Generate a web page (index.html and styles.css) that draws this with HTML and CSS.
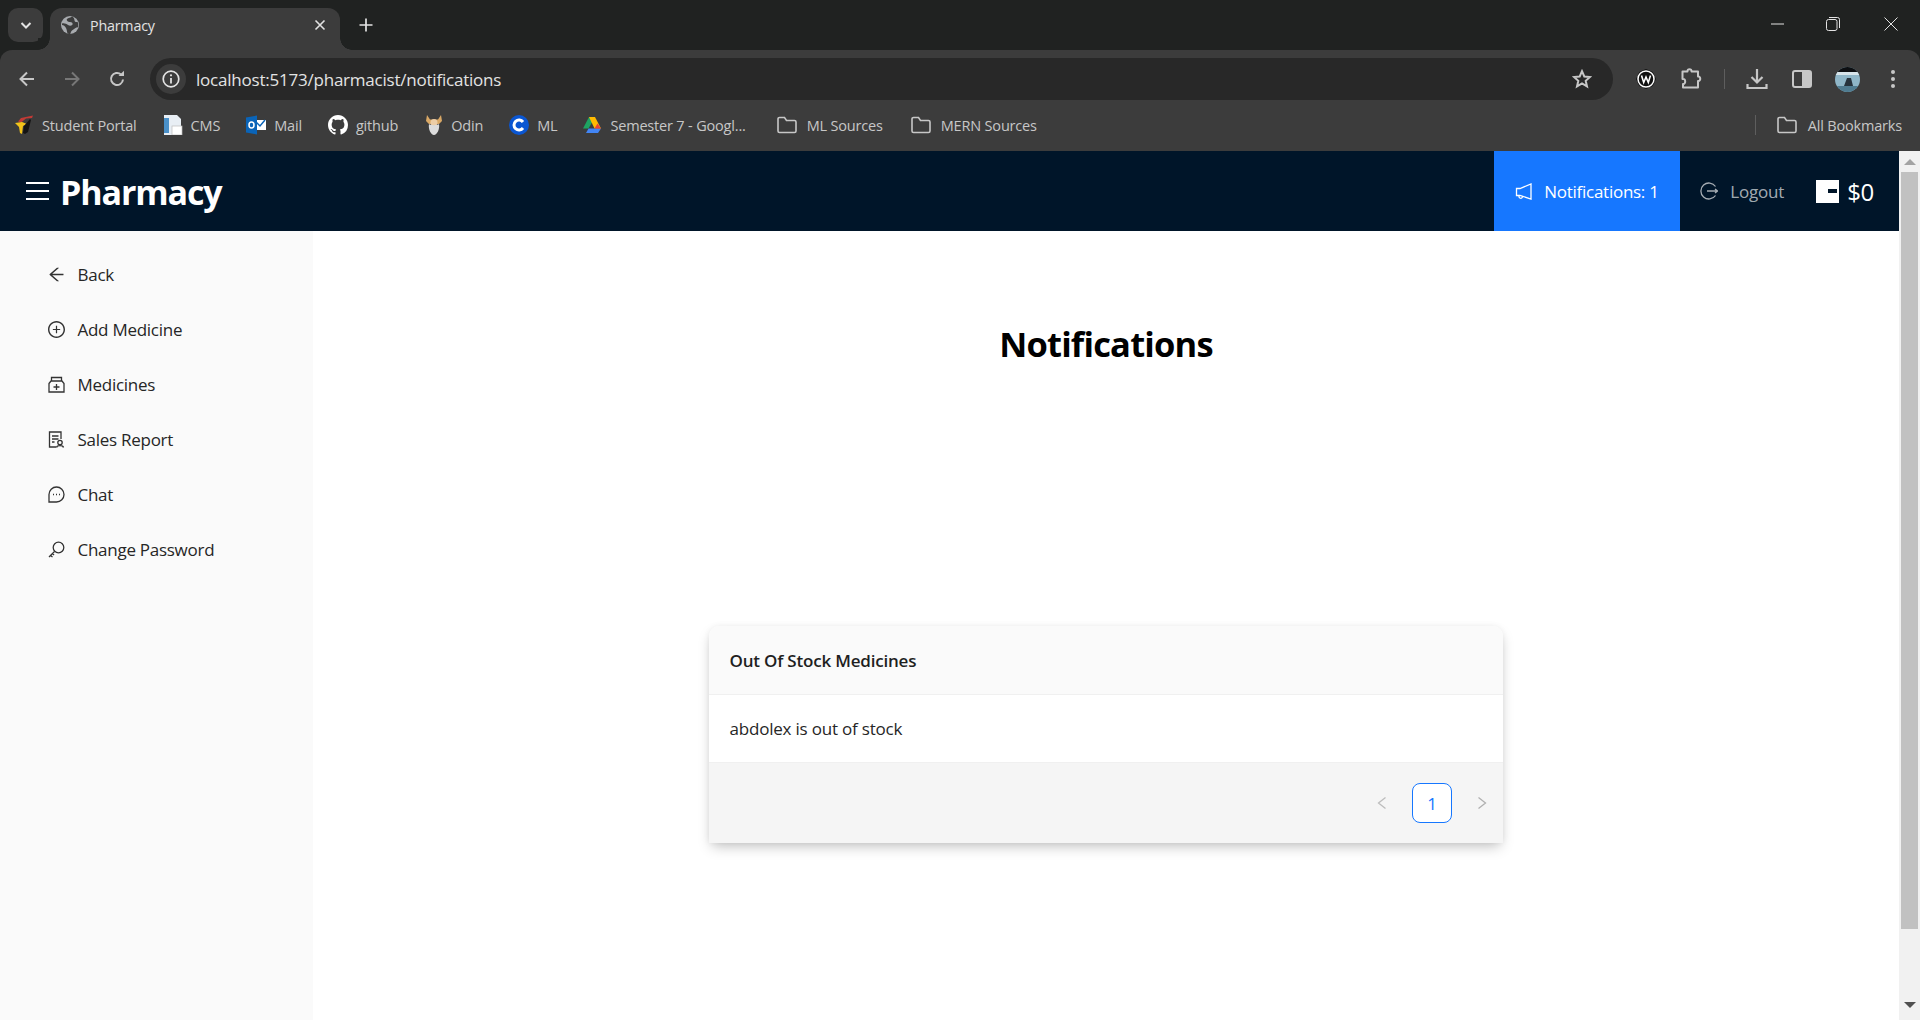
FILE: index.html
```html
<!DOCTYPE html>
<html lang="en">
<head>
    <meta charset="UTF-8">
    <meta name="viewport" content="width=device-width, initial-scale=1.0">
    <title>Pharmacy</title>
    <link rel="stylesheet" href="styles.css">
</head>
<body>
    <!-- browser window chrome -->
    <div class="tabstrip">
        <div class="tab-search">
            <svg width="14" height="14" viewBox="0 0 14 14"><path d="M2.5 5l4.5 4.5L11.500 5" fill="none" stroke="#e3e3e3" stroke-width="2"/></svg>
        </div>
        <div class="tab">
            <svg class="globe" width="18" height="18" viewBox="0 0 18 18"><circle cx="9" cy="9" r="9" fill="#a8abaf"/><path d="M11 .5c-1 1.500-4 1-5 2.500s1 3 3 3 3 1 2.500 2.500-3 1.500-4.500 .5-3.500-2-6-1.500v1.500c1.500 0 3 1 4 3s1 4 1.500 5.500c1 .5 2 .5 3 .2 0-1.500 1-3 2.500-4s2.500-2.500 5-2.500c.5-2 .3-4-.5-5.500-1.500 1-3 0-3-1.500s-1-3-2.500-4z" fill="#3c3c3c"/></svg>
            <span class="tab-title">Pharmacy</span>
            <svg class="tab-close" width="12" height="12" viewBox="0 0 12 12"><path d="M1.500 1.500l9 9M10.500 1.500l-9 9" stroke="#e3e3e3" stroke-width="1.600"/></svg>
        </div>
        <svg class="new-tab" width="14" height="14" viewBox="0 0 14 14"><path d="M7 .5v13M.5 7h13" stroke="#e3e3e3" stroke-width="1.700"/></svg>
        <div class="window-controls">
            <svg width="14" height="14" viewBox="0 0 14 14"><path d="M1 7h13" stroke="#e3e3e3" stroke-width="1"/></svg>
            <svg width="14" height="14" viewBox="0 0 14 14"><rect x=".5" y="2.500" width="10.500" height="11" rx="2" fill="none" stroke="#e3e3e3"/><path d="M3 .5h8.500a2 2 0 0 1 2 2V11" fill="none" stroke="#e3e3e3"/></svg>
            <svg width="14" height="14" viewBox="0 0 14 14"><path d="M.5.5l13 13M13.500.5l-13 13" stroke="#e3e3e3" stroke-width="1"/></svg>
        </div>
    </div>

    <div class="toolbar">
        <div class="nav-buttons">
            <svg width="18" height="18" viewBox="0 0 18 18"><path d="M16 9H3M9 2.500L2.500 9 9 15.500" fill="none" stroke="#c7c7c7" stroke-width="2"/></svg>
            <svg width="18" height="18" viewBox="0 0 18 18"><path d="M2 9h13M9 2.500L15.500 9 9 15.500" fill="none" stroke="#777" stroke-width="2"/></svg>
            <svg width="18" height="18" viewBox="0 0 18 18"><path d="M15 9.500A6 6 0 1 1 13 4.500" fill="none" stroke="#c7c7c7" stroke-width="2"/><path d="M10.500 6h5.500V.8z" fill="#c7c7c7"/></svg>
        </div>
        <div class="omnibox">
            <span class="site-info">
                <svg width="18" height="18" viewBox="0 0 18 18"><circle cx="9" cy="9" r="7.800" fill="none" stroke="#e3e3e3" stroke-width="1.700"/><path d="M9 8v5.500" stroke="#e3e3e3" stroke-width="1.800"/><circle cx="9" cy="5.300" r="1.100" fill="#e3e3e3"/></svg>
            </span>
            <span class="url">localhost:5173/pharmacist/notifications</span>
            <svg class="star" width="20" height="20" viewBox="0 0 20 20"><path d="M10 2.200l2.300 5.300 5.700.5-4.300 3.800 1.300 5.600L10 14.500l-5 2.900 1.300-5.600L2 8l5.700-.5z" fill="none" stroke="#c7c7c7" stroke-width="2"/></svg>
        </div>
        <div class="toolbar-icons">
            <svg class="ext-w" width="20" height="20" viewBox="0 0 20 20"><path d="M10 0l6.800 3 3.200 7-3.200 7-6.800 3-6.800-3L0 10l3.200-7z" fill="#111"/><circle cx="10" cy="10" r="8" fill="none" stroke="#fff" stroke-width="1.500"/><path d="M5.500 6.500l2.200 7L10 8l2.300 5.500 2.200-7" fill="none" stroke="#fff" stroke-width="1.600"/></svg>
            <svg class="ext-puzzle" width="22" height="22" viewBox="0 0 22 22"><path d="M2.500 3.500h5c-.5-3 4.500-3 4 0h6.500v5c3-.5 3 5 0 4.500v6.500H3v-3.500c3 .5 3-6-.5-5z" fill="none" stroke="#c7c7c7" stroke-width="2" stroke-linejoin="round"/></svg>
            <span class="toolbar-sep"></span>
            <svg class="download" width="22" height="22" viewBox="0 0 22 22"><path d="M11 1v13M5.500 9l5.500 5.500L16.500 9M1.500 16v4h19v-4" fill="none" stroke="#c7c7c7" stroke-width="2.200"/></svg>
            <svg class="side-panel" width="20" height="20" viewBox="0 0 20 20"><rect x="1" y="2" width="18" height="16" rx="2" fill="none" stroke="#c7c7c7" stroke-width="2"/><rect x="10" y="2" width="9" height="16" rx="1" fill="#c7c7c7"/></svg>
            <svg class="avatar" width="25" height="25" viewBox="0 0 25 25"><defs><clipPath id="avatar-clip"><circle cx="12.500" cy="12.500" r="12.500"/></clipPath></defs><g clip-path="url(#avatar-clip)"><rect width="25" height="25" fill="#8fb6c8"/><rect width="25" height="5" fill="#0d0f12"/><rect y="5" width="25" height="3" fill="#d7e4ea"/><rect y="19" width="25" height="6" fill="#4f7b90"/><path d="M12 11h4l2 8H9z" fill="#26323c"/></g></svg>
            <svg class="dots" width="6" height="20" viewBox="0 0 6 20"><circle cx="3" cy="3" r="2" fill="#c7c7c7"/><circle cx="3" cy="10" r="2" fill="#c7c7c7"/><circle cx="3" cy="17" r="2" fill="#c7c7c7"/></svg>
        </div>
    </div>

    <div class="bookmarks">
        <a class="bookmark">
            <svg width="19" height="20" viewBox="0 0 19 20"><path d="M18 .5L6 3 3 6.500l3 1 5-4 6-.5z" fill="#c23a35"/><path d="M0 8l7-1 5 2-4 2-1 8-2-1-1-6z" fill="#f2c21a"/><path d="M9 11l6-7 1 1-3 12-3 2-2-1z" fill="#141414"/></svg>
            <span>Student Portal</span>
        </a>
        <a class="bookmark">
            <svg width="20" height="20" viewBox="0 0 20 20"><path d="M1 0h13l4 4v16H1z" fill="#e8eef4"/><rect x="1" y="3" width="5" height="15" fill="#4a90c8"/><rect x="9" y="11" width="10" height="9" fill="#fff" stroke="#bbb" stroke-width=".7"/></svg>
            <span>CMS</span>
        </a>
        <a class="bookmark">
            <svg width="20" height="20" viewBox="0 0 20 20"><rect x="9" y="5" width="11" height="10" fill="#fff"/><path d="M10 7l4 4 5-6" fill="none" stroke="#0a64b8" stroke-width="1.500"/><path d="M0 2.500L11 .5v19L0 17.500z" fill="#0a64b8"/><ellipse cx="5.500" cy="10" rx="2.500" ry="3" fill="none" stroke="#fff" stroke-width="1.500"/></svg>
            <span>Mail</span>
        </a>
        <a class="bookmark">
            <svg width="20" height="20" viewBox="0 0 16 16"><path fill="#fff" d="M8 0C3.580 0 0 3.580 0 8c0 3.540 2.290 6.530 5.470 7.590.4.070.55-.17.55-.38 0-.19-.01-.82-.01-1.490-2.010.37-2.530-.49-2.690-.94-.09-.23-.48-.94-.82-1.130-.28-.15-.68-.52-.01-.53.630-.01 1.080.58 1.230.82.720 1.210 1.870.87 2.330.66.070-.52.280-.87.510-1.070-1.780-.2-3.640-.89-3.640-3.950 0-.87.310-1.590.82-2.150-.08-.2-.36-1.020.08-2.120 0 0 .67-.21 2.200.82.640-.18 1.320-.27 2-.27s1.360.09 2 .27c1.530-1.040 2.200-.82 2.200-.82.440 1.100.16 1.920.08 2.120.51.560.82 1.270.82 2.150 0 3.070-1.870 3.750-3.650 3.950.29.250.54.730.54 1.480 0 1.070-.01 1.930-.01 2.200 0 .21.150.46.550.38A8.010 8.010 0 0 0 16 8c0-4.420-3.580-8-8-8z"/></svg>
            <span>github</span>
        </a>
        <a class="bookmark odin">
            <svg width="16" height="20" viewBox="0 0 16 20"><path d="M1 0l3 4.500h8L15 0l1 6-3 3H3L0 6z" fill="#d9a866"/><circle cx="8" cy="7.500" r="3.500" fill="#eccda6"/><path d="M3 9c1 1.500 9 1.500 10 0 1 5-2 11-5 11S2 14 3 9z" fill="#dcdcdc"/></svg>
            <span>Odin</span>
        </a>
        <a class="bookmark">
            <svg width="20" height="20" viewBox="0 0 20 20"><circle cx="10" cy="10" r="10" fill="#0a56d2"/><path d="M14 7a5 5 0 1 0 0 6" fill="none" stroke="#fff" stroke-width="3"/></svg>
            <span>ML</span>
        </a>
        <a class="bookmark drive">
            <svg width="18" height="18" viewBox="0 0 18 18"><path d="M6 1h6l-3 5.500-3.500 6H0z" fill="#1ea362"/><path d="M12 1l6 11.500h-6.500L6 1z" fill="#ffba00"/><path d="M5.500 12.500H18L15 17H3z" fill="#4285f4"/><path d="M14.500 7.500L18 12.500h-6.500z" fill="#ea4335"/></svg>
            <span>Semester 7 - Googl...</span>
        </a>
        <a class="bookmark source-folder">
            <svg class="folder" width="20" height="18" viewBox="0 0 20 18"><path d="M1 3a1.500 1.500 0 0 1 1.500-1.500h5l2 3h8A1.500 1.500 0 0 1 19 6v9a1.500 1.500 0 0 1-1.500 1.500h-15A1.500 1.500 0 0 1 1 15z" fill="none" stroke="#c7c7c7" stroke-width="1.600"/></svg>
            <span>ML Sources</span>
        </a>
        <a class="bookmark source-folder">
            <svg class="folder" width="20" height="18" viewBox="0 0 20 18"><path d="M1 3a1.500 1.500 0 0 1 1.500-1.500h5l2 3h8A1.500 1.500 0 0 1 19 6v9a1.500 1.500 0 0 1-1.500 1.500h-15A1.500 1.500 0 0 1 1 15z" fill="none" stroke="#c7c7c7" stroke-width="1.600"/></svg>
            <span>MERN Sources</span>
        </a>
        <span class="bookmarks-sep"></span>
        <a class="bookmark all-bookmarks">
            <svg class="folder" width="20" height="18" viewBox="0 0 20 18"><path d="M1 3a1.500 1.500 0 0 1 1.500-1.500h5l2 3h8A1.500 1.500 0 0 1 19 6v9a1.500 1.500 0 0 1-1.500 1.500h-15A1.500 1.500 0 0 1 1 15z" fill="none" stroke="#c7c7c7" stroke-width="1.600"/></svg>
            <span>All Bookmarks</span>
        </a>
    </div>

    <!-- the page itself -->
    <div class="viewport">
        <div class="page">
            <header class="topbar">
                <svg class="burger" width="23" height="20" viewBox="0 0 23 20" preserveAspectRatio="none"><path d="M0 2h23M0 10h23M0 18h23" stroke="#fff" stroke-width="2"/></svg>
                <h1 class="logo">Pharmacy</h1>
                <a class="notif-btn">
                    <svg width="17" height="17" viewBox="0 0 17 17"><path d="M16 1v15L5 12.500H1.500v-7H5zM4 12.500c-.5 3 3 4 3.500 1" fill="none" stroke="#fff" stroke-width="1.300"/></svg>
                    <span>Notifications: 1</span>
                </a>
                <a class="logout">
                    <svg width="18" height="18" viewBox="0 0 18 18"><path d="M15.500 4.500A8 8 0 1 0 15.500 13.500" fill="none" stroke="currentColor" stroke-width="1.300"/><path d="M7 9h10.500M15 7l2.500 2-2.500 2" fill="none" stroke="currentColor" stroke-width="1.300"/></svg>
                    <span>Logout</span>
                </a>
                <div class="balance">
                    <span class="wallet"><span class="wallet-clasp"></span></span>
                    <span class="amount">$0</span>
                </div>
            </header>
            <div class="content">
                <nav class="sidebar">
                    <a class="side-item">
                        <svg width="17" height="17" viewBox="64 64 896 896"><path d="M872 474H286.900l350.200-304c5.600-4.900 2.200-14-5.200-14h-88.500c-3.900 0-7.600 1.400-10.500 3.900L155 487.800a31.960 31.960 0 0 0 0 48.300L535.100 866c1.500 1.300 3.300 2 5.200 2h91.500c7.400 0 10.800-9.200 5.200-14L286.900 550H872c4.400 0 8-3.600 8-8v-60c0-4.400-3.600-8-8-8z"/></svg>
                        <span>Back</span>
                    </a>
                    <a class="side-item">
                        <svg width="17" height="17" viewBox="64 64 896 896"><path d="M696 480H544V328c0-4.400-3.600-8-8-8h-48c-4.400 0-8 3.600-8 8v152H328c-4.400 0-8 3.600-8 8v48c0 4.400 3.600 8 8 8h152v152c0 4.400 3.600 8 8 8h48c4.400 0 8-3.600 8-8V544h152c4.400 0 8-3.600 8-8v-48c0-4.400-3.600-8-8-8z"/><path d="M512 64C264.600 64 64 264.600 64 512s200.600 448 448 448 448-200.600 448-448S759.400 64 512 64zm0 820c-205.400 0-372-166.600-372-372s166.600-372 372-372 372 166.600 372 372-166.600 372-372 372z"/></svg>
                        <span>Add Medicine</span>
                    </a>
                    <a class="side-item">
                        <svg class="line-icon" width="17" height="17" viewBox="0 0 17 17"><path d="M1 7.500l2-2.500h11l2 2.500v8.500H1zM3.500 5V1.500h10V5M8.500 8v6M5.500 11h6"/></svg>
                        <span>Medicines</span>
                    </a>
                    <a class="side-item">
                        <svg class="line-icon" width="17" height="17" viewBox="0 0 17 17"><path d="M8 16H1.500V1h11.500v7M4 5h6.500M4 8h6.500M4 11h2.500"/><circle cx="12" cy="11.500" r="2.200"/><path d="M8.500 16.500c.5-2.500 6.500-2.500 7 0"/></svg>
                        <span>Sales Report</span>
                    </a>
                    <a class="side-item">
                        <svg class="line-icon" width="17" height="17" viewBox="0 0 17 17"><path d="M8.500 1a7.500 7.500 0 1 1 0 15H1v-7.500A7.500 7.500 0 0 1 8.500 1z"/><path class="dots-fill" d="M5 8.500h1M8 8.500h1M11 8.500h1"/></svg>
                        <span>Chat</span>
                    </a>
                    <a class="side-item">
                        <svg class="line-icon" width="17" height="17" viewBox="0 0 17 17"><circle cx="10.500" cy="6.500" r="5.300"/><path d="M6.500 10.500L1 16M2.500 14.500l2 1.500M4.500 12.500l1.500 1.500"/></svg>
                        <span>Change Password</span>
                    </a>
                </nav>
                <main class="main">
                    <h2 class="page-title">Notifications</h2>
                    <section class="card">
                        <div class="card-head">Out Of Stock Medicines</div>
                        <div class="card-body">abdolex is out of stock</div>
                        <div class="card-foot">
                            <svg class="page-arrow" width="12" height="14" viewBox="0 0 12 14"><path d="M9.500 1.500L2.500 7l7 5.500" fill="none" stroke="#bdbdbd" stroke-width="1.300"/></svg>
                            <span class="page-num">1</span>
                            <svg class="page-arrow" width="12" height="14" viewBox="0 0 12 14"><path d="M2.500 1.500L9.500 7l-7 5.500" fill="none" stroke="#b0b0b0" stroke-width="1.300"/></svg>
                        </div>
                    </section>
                </main>
            </div>
        </div>
        <div class="scrollbar">
            <span class="arrow-up"></span>
            <span class="thumb"></span>
            <span class="arrow-down"></span>
        </div>
    </div>
</body>
</html>
```

FILE: styles.css
```css
* { box-sizing: border-box; }
html, body { margin: 0; height: 100%; overflow: hidden; }
body { font-family: "Open Sans", "Noto Sans", sans-serif; display: flex; flex-direction: column; background: #202221; }
h1, h2 { margin: 0; }
svg { display: block; flex: none; }

/* chrome: tabs */
.tabstrip { height: 50px; background: #202221; display: flex; align-items: flex-start; padding: 8px 0 0 8px; position: relative; }
.tab-search { width: 35px; height: 34px; background: #3c3c3c; border-radius: 10px; display: flex; align-items: center; justify-content: center; }
.tab { width: 290px; height: 42px; margin-left: 7px; background: #3c3c3c; border-radius: 12px 12px 0 0; display: flex; align-items: center; padding: 0 14px 8px 11px; position: relative; }
.tab::before, .tab::after { content: ""; position: absolute; bottom: 0; width: 12px; height: 12px; }
.tab::before { left: -12px; background: radial-gradient(circle at 0 0, #202221 11.500px, #3c3c3c 12px); }
.tab::after { right: -12px; background: radial-gradient(circle at 100% 0, #202221 11.500px, #3c3c3c 12px); }
.tab-title { flex: 1; margin-left: 11px; font-size: 14.300px; letter-spacing: -.2px; color: #e3e3e3; }
.new-tab { margin: 10px 0 0 19px; }
.window-controls { margin-left: auto; display: flex; gap: 42px; padding: 9px 22px 0 0; }
.window-controls svg:last-child { margin-left: 2px; }

/* chrome: toolbar */
.toolbar { height: 58px; background: #3c3c3c; border-radius: 12px 12px 0 0; display: flex; align-items: flex-start; padding: 8px 0 0 18px; }
.nav-buttons { display: flex; gap: 27px; padding-top: 12px; }
.omnibox { width: 1463px; height: 42px; margin-left: 24px; background: #282828; border-radius: 21px; display: flex; align-items: center; padding: 0 21px 0 6px; }
.site-info { width: 30px; height: 30px; border-radius: 50%; background: #3c3c3c; display: flex; align-items: center; justify-content: center; }
.url { flex: 1; margin-left: 10px; font-size: 17px; letter-spacing: -.22px; color: #e3e3e3; }
.toolbar-icons { display: flex; align-items: center; height: 42px; margin-left: 23px; }
.ext-puzzle { margin-left: 24px; }
.toolbar-sep { width: 1px; height: 20px; background: #5e5e5e; margin: 0 21px 0 22px; }
.side-panel { margin-left: 24px; }
.avatar { margin-left: 23px; }
.dots { margin-left: 30px; }

/* chrome: bookmarks */
.bookmarks { height: 43px; background: #3c3c3c; display: flex; align-items: flex-start; padding: 7px 0 0 15px; gap: 26px; }
.bookmark { display: flex; align-items: center; gap: 8px; height: 20px; font-size: 14.500px; letter-spacing: -.18px; color: #c7c7c7; white-space: nowrap; }
.odin { margin-left: 2px; }
.odin, .drive { gap: 9px; }
.source-folder { margin-left: 5px; gap: 10px; }
.source-folder + .source-folder { margin-left: 2px; }
.bookmarks-sep { width: 1px; height: 20px; background: #5e5e5e; margin-left: auto; margin-right: -5px; }
.all-bookmarks { padding-right: 18px; }
.all-bookmarks span { margin-left: 3px; }

/* page */
.viewport { flex: 1; display: flex; min-height: 0; background: #fff; }
.page { flex: 1; min-width: 0; display: flex; flex-direction: column; }
.scrollbar { width: 21px; background: #f1f1f1; display: flex; flex-direction: column; align-items: center; padding: 0 2px; }
.thumb { width: 17px; height: 757px; background: #c1c1c1; }
.arrow-up { margin: 8px 0 7px; border: 6px solid transparent; border-top: 0; border-bottom: 6px solid #a3a3a3; }
.arrow-down { margin-top: 73px; border: 6px solid transparent; border-bottom: 0; border-top: 6px solid #505050; }

.topbar { height: 80px; flex: none; background: #001529; display: flex; align-items: center; padding-left: 26px; }
.burger { margin-right: 11px; }
.logo { font-size: 34px; font-weight: 700; letter-spacing: -1.100px; color: #fff; flex: 1; margin-top: 2px; }
.notif-btn { width: 186px; height: 80px; background: #1677ff; color: #fff; display: flex; align-items: center; padding-left: 21px; gap: 12px; font-size: 17px; letter-spacing: -.27px; }
.logout { display: flex; align-items: center; gap: 12px; margin-left: 20px; font-size: 17px; letter-spacing: -.2px; color: rgba(255,255,255,.65); }
.balance { display: flex; align-items: center; gap: 8px; margin-left: 32px; padding-right: 25px; }
.wallet { width: 23px; height: 23px; background: #fff; display: flex; align-items: center; justify-content: flex-end; padding-right: 2px; }
.wallet-clasp { width: 9px; height: 4px; background: #001529; }
.amount { font-size: 24px; color: #fff; letter-spacing: -.3px; }

.content { flex: 1; display: flex; min-height: 0; }
.sidebar { width: 313px; flex: none; background: #fafafa; padding: 16px 0 0 48px; }
.side-item { height: 55px; display: flex; align-items: center; gap: 12.500px; font-size: 17px; letter-spacing: -.27px; color: #262626; }
.side-item svg { fill: #333; }
.side-item .line-icon { fill: none; stroke: #333; stroke-width: 1.300; }
.side-item .dots-fill { stroke-width: 1.600; }

.main { flex: 1; display: flex; flex-direction: column; align-items: center; padding-top: 88px; }
.page-title { font-size: 34.500px; font-weight: 700; line-height: 50px; letter-spacing: -.8px; color: #000; }
.card { width: 794px; margin-top: 257px; border-radius: 10px 10px 0 0; background: #fff; box-shadow: 0 6px 14px -3px rgba(0,0,0,.25), 0 0 6px rgba(0,0,0,.05); overflow: hidden; }
.card-head { height: 69px; display: flex; align-items: center; padding: 1px 0 0 20.500px; background: #fafafa; border-bottom: 1px solid #f0f0f0; font-size: 17px; font-weight: 600; letter-spacing: -.2px; color: #1f1f1f; }
.card-body { height: 68px; display: flex; align-items: center; padding-left: 20.500px; border-bottom: 1px solid #f0f0f0; font-size: 17px; letter-spacing: -.2px; color: #262626; }
.card-foot { height: 80px; background: #f5f5f5; display: flex; align-items: center; justify-content: flex-end; padding-right: 15px; gap: 24px; }
.page-num { width: 40px; height: 40px; display: flex; align-items: center; justify-content: center; border: 1.500px solid #1677ff; border-radius: 8px; background: #fff; color: #1677ff; font-size: 17px; }
```
